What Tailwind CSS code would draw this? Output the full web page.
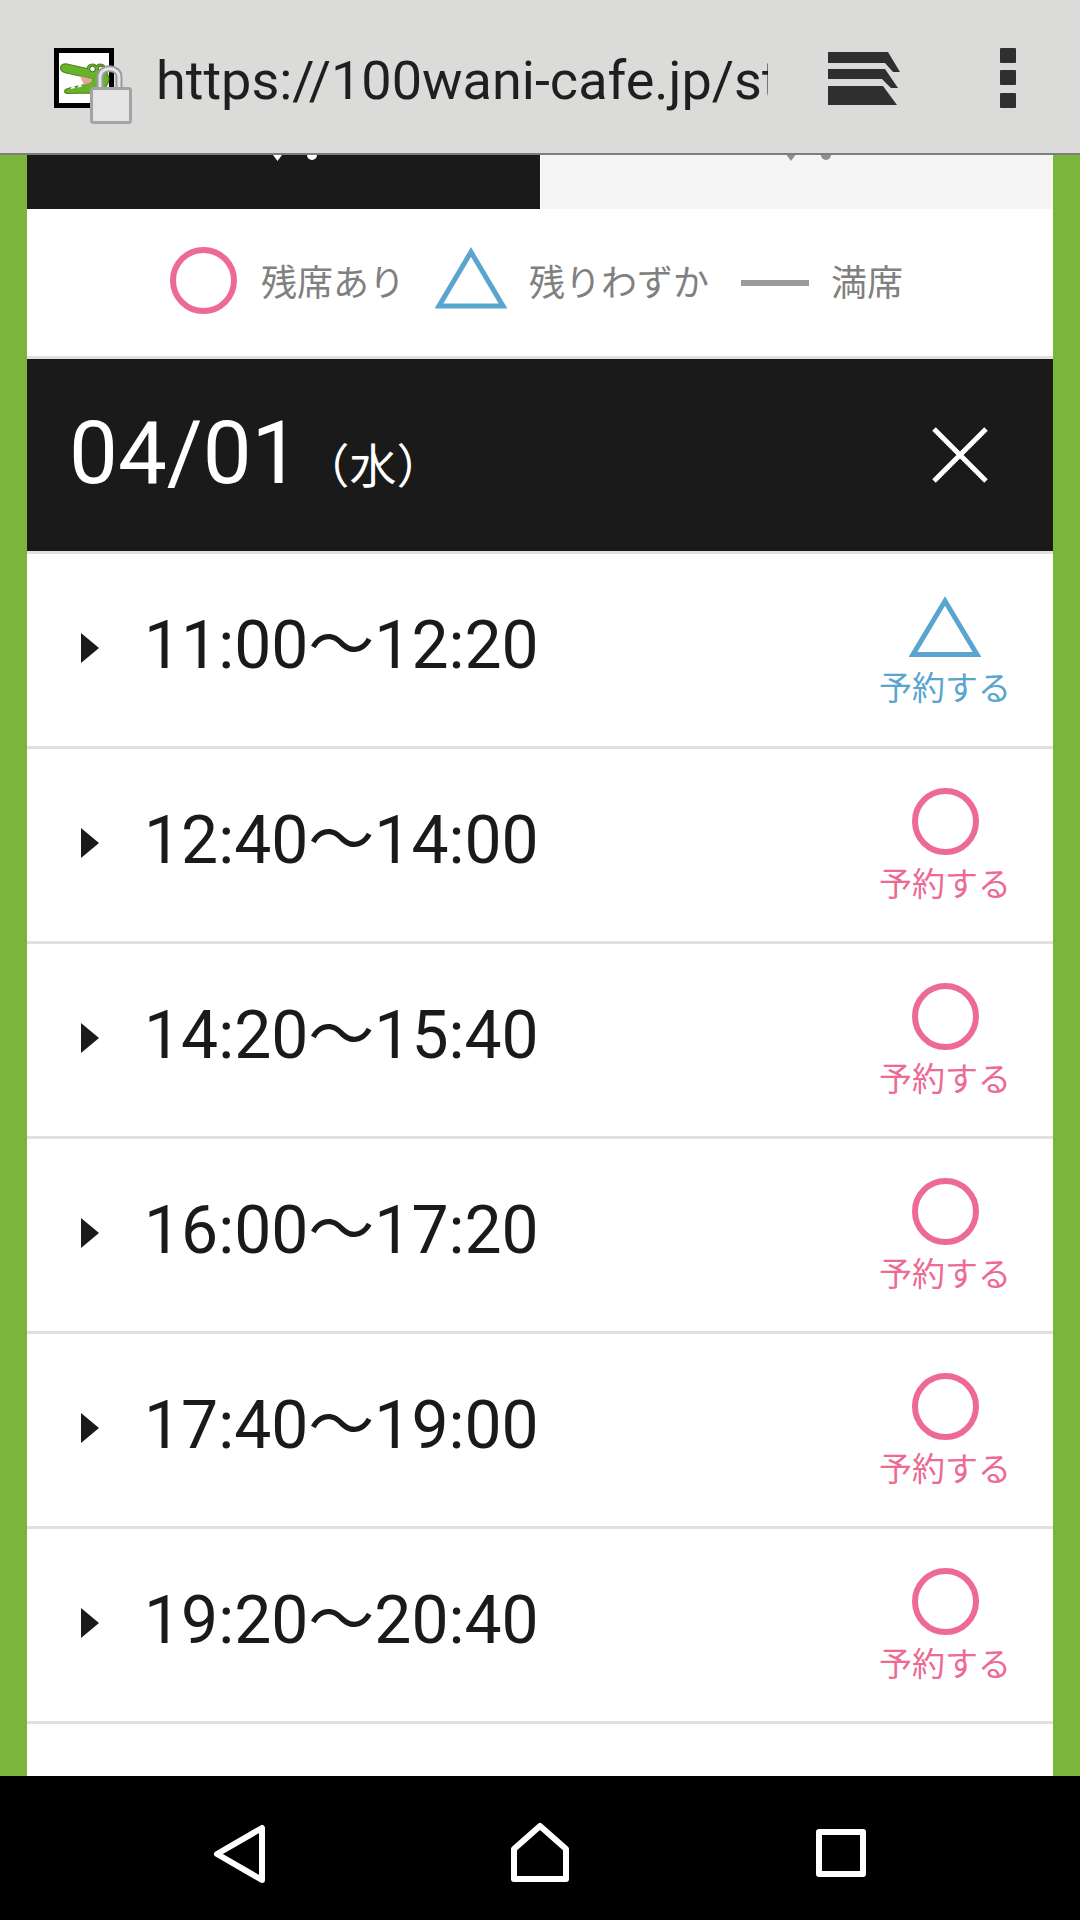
<!DOCTYPE html>
<html lang="ja">
<head>
    <meta charset="UTF-8">
    <meta name="viewport" content="width=device-width, initial-scale=1.0">
    <title>100wani-cafe</title>
    <script src="https://cdn.jsdelivr.net/npm/@tailwindcss/browser@4"></script>
</head>
<body class="w-[1080px] h-[1920px] flex flex-col overflow-hidden bg-black font-[Roboto,'Noto_Sans_CJK_JP',sans-serif]">

<!-- browser bar -->
<header class="h-[155px] shrink-0 flex items-start bg-[#dbdbd9] border-b-2 border-[#7d7d7d]">
    <svg class="ml-[54px] mt-[48px] shrink-0" width="80" height="78" viewBox="0 0 80 78">
        <rect x="2.500" y="2.500" width="55" height="55" fill="#fff" stroke="#000" stroke-width="5"/>
        <path d="M6.500 20 C6.500 17 9 15.500 13 16 L33 20.500 C34 15.500 40 15 42.500 18 C45 14.500 51 16 52 21 L55 31 C54 40 46 45.500 37 45 L14 45.500 C10 45.500 9.500 42.500 12.500 41 C20 38.500 29 38 37 34 L39 31 L28 28.500 L12 25 C8.500 24 6.500 22.500 6.500 20 Z" fill="#68b32c" stroke="#55831f" stroke-width="1.200"/>
        <path d="M26 28 L39 31 L37 34.500 L30 37 Z" fill="#e3a793"/>
        <circle cx="38.500" cy="21" r="2.800" fill="#fff" stroke="#41621a"/>
        <circle cx="47" cy="21" r="2.800" fill="#fff" stroke="#41621a"/>
        <path d="M14 26 l1.500 4.500 l2 -3.500 M22 28 l1 4 l2 -3 M17 41 l2 -4 l2 3 M24 39.500 l2 -4 l1.500 3" fill="#fff" stroke="#fff" stroke-width="0.800"/>
        <path d="M46 40 V29 C46 18 65 18 65 29 V40" fill="none" stroke="#9b9b9b" stroke-width="7"/>
        <path d="M46 40 V29 C46 18 65 18 65 29 V40" fill="none" stroke="#e4e4e4" stroke-width="3"/>
        <rect x="37.500" y="40.500" width="39" height="34" rx="2" fill="#e4e4e4" stroke="#a3a3a3" stroke-width="3"/>
    </svg>
    <div class="ml-[22px] mt-[47px] w-[612px] overflow-hidden whitespace-nowrap text-[54px] leading-[68px] text-[#1f1f1f]">https://100wani-cafe.jp/st</div>
    <svg class="ml-[60px] mt-[52px] shrink-0" width="72" height="53" viewBox="0 0 72 53" fill="#2f2f2f">
        <path d="M0 0 H60 L72 20 H65 L57 11 H0 Z"/>
        <path d="M0 17 H57 L70 36 H63 L54 27 H0 Z"/>
        <path d="M0 34 H55 L69 53 H0 Z"/>
    </svg>
    <div class="ml-[100px] mt-[48px] flex flex-col shrink-0">
        <div class="w-4 h-[15px] rounded-[1px] bg-[#2f2f2f]"></div>
        <div class="w-4 h-[15px] mt-[7px] rounded-[1px] bg-[#2f2f2f]"></div>
        <div class="w-4 h-[15px] mt-[8px] rounded-[1px] bg-[#2f2f2f]"></div>
    </div>
</header>

<!-- page -->
<main class="flex-1 min-h-0 px-[27px] bg-[#7cb53b] overflow-hidden">
    <div class="h-full flex flex-col bg-white">
        <div class="h-[54px] shrink-0 flex">
            <div class="w-[513px] bg-[#1a1a1a] flex justify-center gap-[25px] pl-[23px]">
                <div class="w-[9px] h-[6px] bg-white [clip-path:polygon(0_0,100%_0,50%_100%)]"></div>
                <div class="w-[10px] h-[5px] rounded-b-full bg-white"></div>
            </div>
            <div class="ml-[1px] flex-1 bg-[#f5f5f5] flex justify-center gap-[25px] pl-[23px]">
                <div class="w-[9px] h-[6px] bg-[#8f8f8f] [clip-path:polygon(0_0,100%_0,50%_100%)]"></div>
                <div class="w-[10px] h-[5px] rounded-b-full bg-[#8f8f8f]"></div>
            </div>
        </div>

        <!-- legend -->
        <div class="h-[150px] shrink-0 flex items-center pl-[143px] border-b-[3px] border-[#e0e0e0] text-[36px] text-[#808080]">
            <div class="w-[67px] h-[67px] mb-[5px] rounded-full border-[6px] border-[#ec6a94] shrink-0"></div>
            <span class="ml-[24px] mt-[2px] whitespace-nowrap">残席あり</span>
            <svg class="ml-[30px] mb-[10px] shrink-0" width="72" height="62" viewBox="0 0 72 62"><path d="M36 5 L68 59 H4 Z" fill="none" stroke="#5aa5cf" stroke-width="5"/></svg>
            <span class="ml-[22px] mt-[2px] whitespace-nowrap">残りわずか</span>
            <div class="ml-[32px] w-[68px] h-[6px] bg-[#9a9a9a] shrink-0"></div>
            <span class="ml-[22px] mt-[2px] whitespace-nowrap">満席</span>
        </div>

        <!-- date -->
        <div class="h-[192px] shrink-0 flex items-center justify-between pl-[42px] pr-[65px] bg-[#1a1a1a] text-white">
            <div class="flex items-baseline whitespace-nowrap mb-[4px]">
                <span class="text-[87px] font-normal leading-none">04/01</span>
                <span class="ml-[2px] text-[47px] leading-none">（水）</span>
            </div>
            <svg width="56" height="56" viewBox="0 0 56 56"><path d="M2 2 L54 54 M54 2 L2 54" stroke="#fff" stroke-width="5"/></svg>
        </div>

        <div class="h-[3px] shrink-0 bg-[#e0e0e0]"></div>

        <!-- time slots -->
        <div class="h-[195px] shrink-0 flex items-center border-b-[3px] border-[#e0e0e0] pl-[54px] pr-[43px] pb-[8px]">
            <div class="w-[18px] h-[30px] mt-[4px] bg-[#1a1a1a] [clip-path:polygon(0_0,100%_50%,0_100%)] shrink-0"></div>
            <span class="ml-[45px] flex-1 text-[66px] leading-none text-[#1a1a1a] whitespace-nowrap">11:00〜12:20</span>
            <div class="w-[130px] self-start mt-[42px] flex flex-col items-center text-[#5aa5cf]">
                <svg width="72" height="62" viewBox="0 0 72 62"><path d="M36 5 L68 58.500 H4 Z" fill="none" stroke="#5aa5cf" stroke-width="5"/></svg>
                <span class="mt-[11px] text-[33px] leading-[40px] whitespace-nowrap">予約する</span>
            </div>
        </div>
        <div class="h-[195px] shrink-0 flex items-center border-b-[3px] border-[#e0e0e0] pl-[54px] pr-[43px] pb-[8px]">
            <div class="w-[18px] h-[30px] mt-[4px] bg-[#1a1a1a] [clip-path:polygon(0_0,100%_50%,0_100%)] shrink-0"></div>
            <span class="ml-[45px] flex-1 text-[66px] leading-none text-[#1a1a1a] whitespace-nowrap">12:40〜14:00</span>
            <div class="w-[130px] self-start mt-[39px] flex flex-col items-center text-[#ec6a94]">
                <div class="w-[67px] h-[67px] rounded-full border-[6px] border-[#ec6a94]"></div>
                <span class="mt-[10px] text-[33px] leading-[40px] whitespace-nowrap">予約する</span>
            </div>
        </div>
        <div class="h-[195px] shrink-0 flex items-center border-b-[3px] border-[#e0e0e0] pl-[54px] pr-[43px] pb-[8px]">
            <div class="w-[18px] h-[30px] mt-[4px] bg-[#1a1a1a] [clip-path:polygon(0_0,100%_50%,0_100%)] shrink-0"></div>
            <span class="ml-[45px] flex-1 text-[66px] leading-none text-[#1a1a1a] whitespace-nowrap">14:20〜15:40</span>
            <div class="w-[130px] self-start mt-[39px] flex flex-col items-center text-[#ec6a94]">
                <div class="w-[67px] h-[67px] rounded-full border-[6px] border-[#ec6a94]"></div>
                <span class="mt-[10px] text-[33px] leading-[40px] whitespace-nowrap">予約する</span>
            </div>
        </div>
        <div class="h-[195px] shrink-0 flex items-center border-b-[3px] border-[#e0e0e0] pl-[54px] pr-[43px] pb-[8px]">
            <div class="w-[18px] h-[30px] mt-[4px] bg-[#1a1a1a] [clip-path:polygon(0_0,100%_50%,0_100%)] shrink-0"></div>
            <span class="ml-[45px] flex-1 text-[66px] leading-none text-[#1a1a1a] whitespace-nowrap">16:00〜17:20</span>
            <div class="w-[130px] self-start mt-[39px] flex flex-col items-center text-[#ec6a94]">
                <div class="w-[67px] h-[67px] rounded-full border-[6px] border-[#ec6a94]"></div>
                <span class="mt-[10px] text-[33px] leading-[40px] whitespace-nowrap">予約する</span>
            </div>
        </div>
        <div class="h-[195px] shrink-0 flex items-center border-b-[3px] border-[#e0e0e0] pl-[54px] pr-[43px] pb-[8px]">
            <div class="w-[18px] h-[30px] mt-[4px] bg-[#1a1a1a] [clip-path:polygon(0_0,100%_50%,0_100%)] shrink-0"></div>
            <span class="ml-[45px] flex-1 text-[66px] leading-none text-[#1a1a1a] whitespace-nowrap">17:40〜19:00</span>
            <div class="w-[130px] self-start mt-[39px] flex flex-col items-center text-[#ec6a94]">
                <div class="w-[67px] h-[67px] rounded-full border-[6px] border-[#ec6a94]"></div>
                <span class="mt-[10px] text-[33px] leading-[40px] whitespace-nowrap">予約する</span>
            </div>
        </div>
        <div class="h-[195px] shrink-0 flex items-center border-b-[3px] border-[#e0e0e0] pl-[54px] pr-[43px] pb-[8px]">
            <div class="w-[18px] h-[30px] mt-[4px] bg-[#1a1a1a] [clip-path:polygon(0_0,100%_50%,0_100%)] shrink-0"></div>
            <span class="ml-[45px] flex-1 text-[66px] leading-none text-[#1a1a1a] whitespace-nowrap">19:20〜20:40</span>
            <div class="w-[130px] self-start mt-[39px] flex flex-col items-center text-[#ec6a94]">
                <div class="w-[67px] h-[67px] rounded-full border-[6px] border-[#ec6a94]"></div>
                <span class="mt-[10px] text-[33px] leading-[40px] whitespace-nowrap">予約する</span>
            </div>
        </div>
    </div>
</main>

<!-- android nav -->
<nav class="h-[144px] shrink-0 bg-black relative">
    <svg class="absolute left-[212px] top-[48px]" width="56" height="60" viewBox="0 0 56 60" fill="none" stroke="#fff" stroke-width="6" stroke-linejoin="round"><path d="M50 4 V56 L5 30 Z"/></svg>
    <svg class="absolute left-[510px] top-[45px]" width="60" height="62" viewBox="0 0 60 62" fill="none" stroke="#fff" stroke-width="6" stroke-linejoin="round"><path d="M30 5 L56 28 V58 H4 V28 Z"/></svg>
    <svg class="absolute left-[816px] top-[53px]" width="50" height="48" viewBox="0 0 50 48" fill="none" stroke="#fff" stroke-width="6" stroke-linejoin="round"><rect x="3" y="3" width="44" height="42"/></svg>
</nav>
</body>
</html>
